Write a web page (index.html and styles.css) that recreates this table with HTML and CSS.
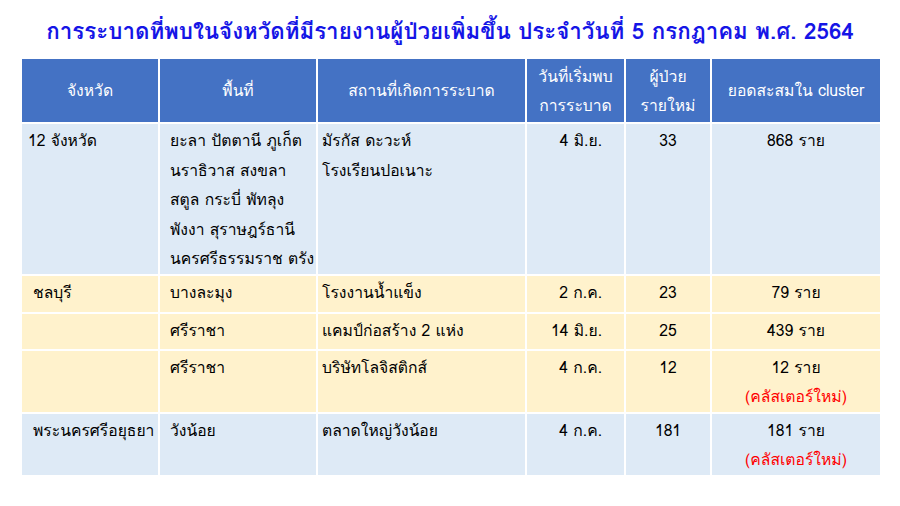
FILE: index.html
```html
<!DOCTYPE html>
<html lang="th">
<head>
<meta charset="utf-8">
<link rel="stylesheet" href="styles.css">
</head>
<body>
<div class="page">
  <h1 class="title">การระบาดที่พบในจังหวัดที่มีรายงานผู้ป่วยเพิ่มขึ้น ประจำวันที่ 5 กรกฎาคม พ.ศ. 2564</h1>
  <table class="grid">
    <colgroup>
      <col class="c1"><col class="c2"><col class="c3"><col class="c4"><col class="c5"><col class="c6">
    </colgroup>
    <thead>
      <tr>
        <th>จังหวัด</th>
        <th>พื้นที่</th>
        <th>สถานที่เกิดการระบาด</th>
        <th>วันที่เริ่มพบ<br>การระบาด</th>
        <th>ผู้ป่วย<br>รายใหม่</th>
        <th>ยอดสะสมใน cluster</th>
      </tr>
    </thead>
    <tbody>
      <tr class="blue r1">
        <td class="prov first">12 จังหวัด</td>
        <td class="area">ยะลา ปัตตานี ภูเก็ต<br>นราธิวาส สงขลา<br>สตูล กระบี่ พัทลุง<br>พังงา สุราษฎร์ธานี<br>นครศรีธรรมราช ตรัง</td>
        <td class="place">มัรกัส ดะวะห์<br>โรงเรียนปอเนาะ</td>
        <td class="date">4 มิ.ย.</td>
        <td class="num">33</td>
        <td class="total">868 ราย</td>
      </tr>
      <tr class="yellow r2">
        <td class="prov">ชลบุรี</td>
        <td class="area">บางละมุง</td>
        <td class="place">โรงงานน้ำแข็ง</td>
        <td class="date">2 ก.ค.</td>
        <td class="num">23</td>
        <td class="total">79 ราย</td>
      </tr>
      <tr class="yellow r3">
        <td class="prov"></td>
        <td class="area">ศรีราชา</td>
        <td class="place">แคมป์ก่อสร้าง 2 แห่ง</td>
        <td class="date">14 มิ.ย.</td>
        <td class="num">25</td>
        <td class="total">439 ราย</td>
      </tr>
      <tr class="yellow r4">
        <td class="prov"></td>
        <td class="area">ศรีราชา</td>
        <td class="place">บริษัทโลจิสติกส์</td>
        <td class="date">4 ก.ค.</td>
        <td class="num">12</td>
        <td class="total">12 ราย<br><span class="new">(คลัสเตอร์ใหม่)</span></td>
      </tr>
      <tr class="blue r5">
        <td class="prov">พระนครศรีอยุธยา</td>
        <td class="area">วังน้อย</td>
        <td class="place">ตลาดใหญ่วังน้อย</td>
        <td class="date">4 ก.ค.</td>
        <td class="num">181</td>
        <td class="total">181 ราย<br><span class="new">(คลัสเตอร์ใหม่)</span></td>
      </tr>
    </tbody>
  </table>
</div>
</body>
</html>
```
FILE: styles.css
```css
html, body {
  margin: 0;
  padding: 0;
  background: #ffffff;
}
body {
  font-family: "Loma", "Garuda", "Waree", "Tahoma", "Noto Sans Thai Looped", "Noto Sans Thai", "Noto Sans", sans-serif;
  color: #000000;
}
.page {
  width: 900px;
  height: 506px;
  padding: 14px 20px 0 20px;
  box-sizing: border-box;
}
.title {
  margin: 0 0 8px 0;
  height: 35px;
  font-size: 22.3px;
  line-height: 35px;
  font-weight: bold;
  color: #1515e6;
  text-align: center;
  white-space: nowrap;
}
.grid {
  width: 860px;
  border-collapse: collapse;
  table-layout: fixed;
  font-size: 15.7px;
}
.c1 { width: 138px; }
.c2 { width: 158px; }
.c3 { width: 209px; }
.c4 { width: 99px; }
.c5 { width: 86px; }
.c6 { width: 170px; }
.grid th, .grid td {
  border: 2px solid #ffffff;
  vertical-align: top;
  padding: 0;
}
.grid th {
  background: #4472c4;
  color: #ffffff;
  font-weight: normal;
  height: 63px;
  vertical-align: middle;
  line-height: 29px;
  text-align: center;
  white-space: nowrap;
}
.grid td {
  line-height: 29.5px;
  padding-top: 2px;
  white-space: nowrap;
}
.blue td { background: #deeaf6; }
.yellow td { background: #fff2cc; }
.r1 td { height: 146px; }
.r2 td { height: 34px; }
.r3 td { height: 33px; }
.r4 td { height: 59px; }
.r5 td { height: 59px; }
.grid .prov { padding-left: 11px; }
.grid .prov.first { padding-left: 6px; }
.grid .area { padding-left: 10px; }
.grid .place { padding-left: 4px; }
.grid .date { text-align: right; padding-right: 22px; }
.grid .num { text-align: center; }
.grid .total { text-align: center; }
.new { color: #ff0000; }
```
